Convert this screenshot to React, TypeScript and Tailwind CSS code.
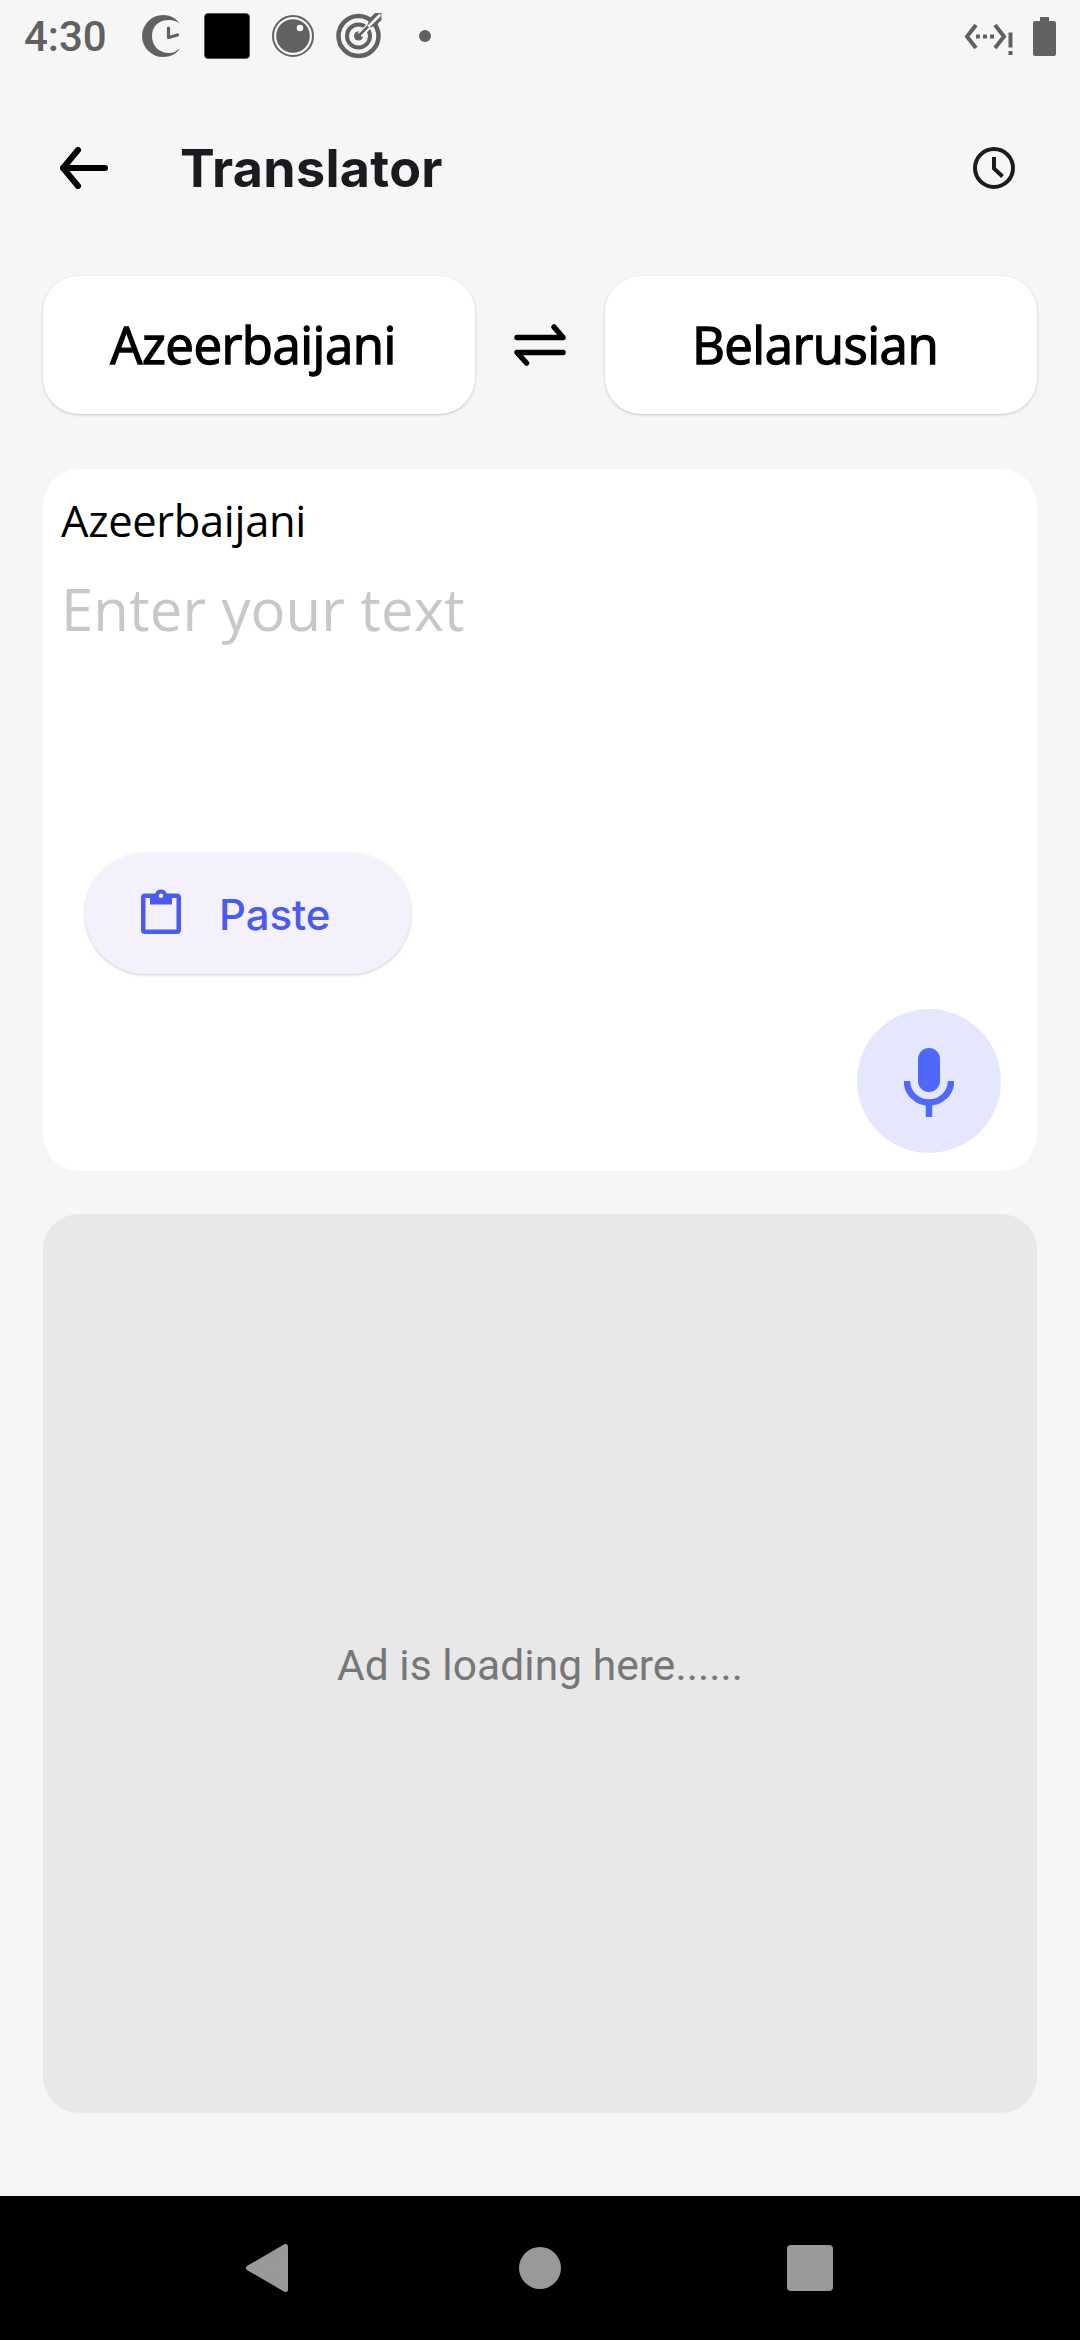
import React from "react";

function StatusBar() {
  return (
    <div className="flex h-[72px] shrink-0 items-center text-[#616161]">
      <span className="mt-[2px] ml-[24px] w-[118px] font-['Roboto',sans-serif] text-[42px] leading-none font-medium">4:30</span>
      <svg className="h-[44px] w-[40px]" viewBox="0 0 40 44" fill="currentColor">
        <path d="M38 10C34 4 28 1 21 1a21 21 0 1 0 0 42c7 0 14-3 17-9-3 3-7 5-11 5-10 0-17-7-17-17S17 6 27 6c4 0 8 1 11 4Z" />
        <path d="M26.500 14v9.500l9-2.500" fill="none" stroke="currentColor" strokeWidth="3.200" strokeLinecap="round" strokeLinejoin="round" />
      </svg>
      <div className="ml-[22px] size-[46px] rounded-[4px] border border-[#555] bg-black" />
      <svg className="ml-[22px] size-[42px]" viewBox="0 0 42 42">
        <circle cx="21" cy="21" r="20" fill="none" stroke="currentColor" strokeWidth="2" />
        <circle cx="21" cy="21" r="16.800" fill="currentColor" />
        <circle cx="28" cy="13" r="3.300" fill="#f6f6f6" />
      </svg>
      <svg className="ml-[22px] size-[46px]" viewBox="0 0 46 46" fill="none" stroke="currentColor">
        <circle cx="22.500" cy="23" r="20" strokeWidth="4.500" />
        <circle cx="22.500" cy="23" r="11.500" strokeWidth="4" />
        <circle cx="22.500" cy="23" r="4.500" fill="currentColor" stroke="none" />
        <path d="M24 22 35 11" stroke="#f6f6f6" strokeWidth="6" />
        <path d="M31 13 34 5 39 0H45.500V7L40 12.500 32.500 15Z" fill="currentColor" stroke="none" />
        <path d="M31 15 44.500 1.500" stroke="#f6f6f6" strokeWidth="2.600" />
        <path d="M23 22.500 32 13.500" strokeWidth="2.500" />
      </svg>
      <div className="ml-[37px] size-[12px] rounded-full bg-[#616161]" />
      <svg className="mt-[6px] ml-auto h-[32px] w-[50px]" viewBox="0 0 50 32" fill="none" stroke="currentColor">
        <path d="M12 2 3 13.500 12 25M31 2l9 11.500L31 25" strokeWidth="4" />
        <path d="M12 13.500h4M19 13.500h4M26 13.500h4" strokeWidth="4" />
        <path d="M46.500 9.500v15M46.500 28v4" strokeWidth="4" />
      </svg>
      <svg className="mr-[24px] ml-[19px] h-[39px] w-[23px]" viewBox="0 0 23 39" fill="currentColor">
        <path d="M7 0h9v4h5a2 2 0 0 1 2 2v31a2 2 0 0 1-2 2H2a2 2 0 0 1-2-2V6a2 2 0 0 1 2-2h5Z" />
      </svg>
    </div>
  );
}

function Header() {
  return (
    <header className="flex h-[192px] shrink-0 items-center px-[60px]">
      <svg className="h-[42px] w-[48px]" viewBox="0 0 48 42" fill="none" stroke="#000" strokeWidth="6" strokeLinecap="round" strokeLinejoin="round">
        <path d="M45 21H3M18 3 3 21l15 18" />
      </svg>
      <h1 className="mt-px ml-[72px] font-['Inter',sans-serif] text-[52px] leading-none font-bold tracking-[0.300px] text-[#1b1b1f]">Translator</h1>
      <svg className="mr-[5px] ml-auto size-[42px]" viewBox="0 0 42 42" fill="none" stroke="#1b1b1f" strokeWidth="4">
        <circle cx="21" cy="21" r="19" />
        <path d="M21 10v11.500l8.500 8" />
      </svg>
    </header>
  );
}

function LanguageButton({ name }: { name: string }) {
  return (
    <button className="flex h-[138px] w-[432px] items-center justify-center rounded-[36px] bg-white pr-[12px] pb-[1px] font-['Open_Sans',sans-serif] text-[51px] leading-none tracking-[-0.550px] text-black shadow-[0_1px_3px_rgba(0,0,0,0.2)] [-webkit-text-stroke:1.300px_black]">
      {name}
    </button>
  );
}

export default function App() {
  return (
    <div className="flex h-[2340px] w-[1080px] flex-col overflow-hidden bg-[#f6f6f6]">
      <StatusBar />
      <div className="flex flex-1 flex-col">
        <Header />
        <div className="mx-[43px] mt-[12px] flex items-center justify-between">
          <LanguageButton name="Azeerbaijani" />
          <svg className="h-[44px] w-[52px]" viewBox="0 0 52 44" fill="none" stroke="#000" strokeWidth="5.500" strokeLinecap="round" strokeLinejoin="round">
            <path d="M3 14.500H49L40 4M49 29.500H3l9.500 10.500" />
          </svg>
          <LanguageButton name="Belarusian" />
        </div>

        <section className="mx-[43px] mt-[55px] flex h-[702px] flex-col rounded-[36px] bg-white font-['Open_Sans',sans-serif]">
          <div className="mt-[20px] ml-[18px] h-[64px] text-[43.500px] leading-[64px] tracking-[-0.350px] text-black">Azeerbaijani</div>
          <div className="mt-[16px] ml-[18px] h-[80px] text-[58px] leading-[80px] tracking-[0.100px] text-[#c8c8c8]">Enter your text</div>
          <button className="mt-[204px] ml-[42px] flex h-[121px] w-[326px] items-center rounded-full bg-[#f4f1fd] shadow-[0_1px_3px_rgba(0,0,0,0.2)]">
            <svg className="-mt-[4px] ml-[56px] h-[45px] w-[40px]" viewBox="0 0 40 45" fill="#4a5bf0">
              <path fillRule="evenodd" d="M4 4.500H14.200a6.200 6.200 0 0 1 11.600 0H36a4 4 0 0 1 4 4V41a4 4 0 0 1-4 4H4a4 4 0 0 1-4-4V8.500a4 4 0 0 1 4-4ZM4.500 9v31.500h31V9H31v6.500H9V9ZM20 4.500a2.200 2.200 0 1 0 0 4.400 2.200 2.200 0 0 0 0-4.400Z" />
            </svg>
            <span className="mt-[3px] ml-[38px] font-['Inter',sans-serif] text-[42px] leading-none font-medium tracking-[-0.100px] text-[#4a5bf0]">Paste</span>
          </button>
          <button className="mt-[35px] mr-[36px] flex size-[144px] items-center justify-center self-end rounded-full bg-[#e5e7ff]">
            <svg className="mt-[4px] h-[70px] w-[50px]" viewBox="0 0 50 70">
              <rect x="14" y="0" width="22" height="44" rx="11" fill="#5068fa" />
              <path d="M3 33a22 21.500 0 0 0 44 0M25 54v15" fill="none" stroke="#5068fa" strokeWidth="6.500" />
            </svg>
          </button>
        </section>

        <section className="mx-[43px] mt-[43px] flex h-[899px] items-center justify-center rounded-[36px] bg-[#e8e8e8] pt-[5px] font-['Roboto',sans-serif] text-[42.500px] tracking-[0.060px] text-[#777]">
          Ad is loading here......
        </section>
      </div>
      <nav className="flex h-[144px] shrink-0 items-center bg-black pl-[245px]">
        <svg className="h-[50px] w-[44px]" viewBox="0 0 44 50" fill="#999" stroke="#999" strokeWidth="5" strokeLinejoin="round">
          <path d="M3.500 25 40.500 3.500v43Z" />
        </svg>
        <div className="ml-[230px] size-[42px] rounded-full bg-[#999]" />
        <div className="ml-[226px] size-[46px] rounded-[4px] bg-[#999]" />
      </nav>
    </div>
  );
}
